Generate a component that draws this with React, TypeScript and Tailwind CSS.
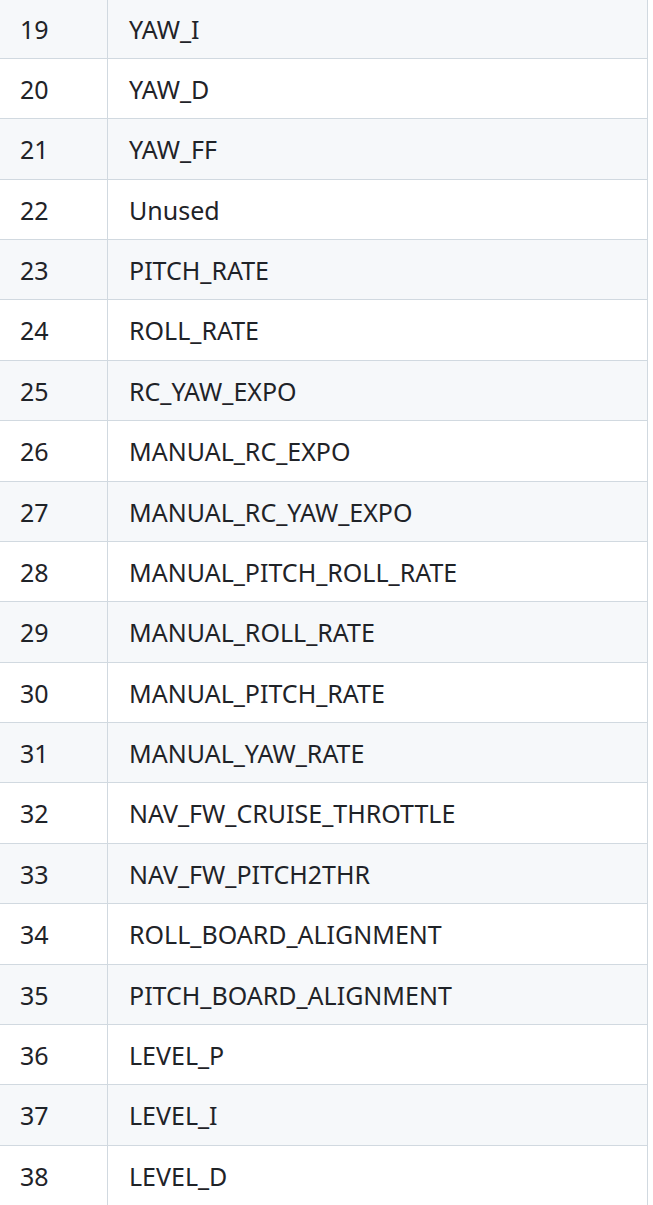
import React from 'react';

const rows: [number, string][] = [
    [19, 'YAW_I'],
    [20, 'YAW_D'],
    [21, 'YAW_FF'],
    [22, 'Unused'],
    [23, 'PITCH_RATE'],
    [24, 'ROLL_RATE'],
    [25, 'RC_YAW_EXPO'],
    [26, 'MANUAL_RC_EXPO'],
    [27, 'MANUAL_RC_YAW_EXPO'],
    [28, 'MANUAL_PITCH_ROLL_RATE'],
    [29, 'MANUAL_ROLL_RATE'],
    [30, 'MANUAL_PITCH_RATE'],
    [31, 'MANUAL_YAW_RATE'],
    [32, 'NAV_FW_CRUISE_THROTTLE'],
    [33, 'NAV_FW_PITCH2THR'],
    [34, 'ROLL_BOARD_ALIGNMENT'],
    [35, 'PITCH_BOARD_ALIGNMENT'],
    [36, 'LEVEL_P'],
    [37, 'LEVEL_I'],
    [38, 'LEVEL_D'],
];

const App: React.FC = () => {
    return (
        <div className="w-[653px] h-[1205px] overflow-hidden bg-white font-['Noto_Sans',sans-serif] text-[25px] text-[#1f2328]">
            <div className="-mt-[1.4px] w-[648px] border-r border-[#d1d9e0]">
                {rows.map(([num, name], i) => (
                    <div
                        key={num}
                        className={`flex h-[60.39px] items-center border-b border-[#d1d9e0] ${
                            i % 2 === 0 ? 'bg-[#f6f8fa]' : 'bg-white'
                        }`}
                    >
                        <div className="w-[108px] h-full flex items-center pl-[20px] pt-[2px] border-r border-[#d1d9e0]">
                            {num}
                        </div>
                        <div className="flex-1 h-full flex items-center pl-[21px] pt-[2px]">{name}</div>
                    </div>
                ))}
            </div>
        </div>
    );
};

export default App;
